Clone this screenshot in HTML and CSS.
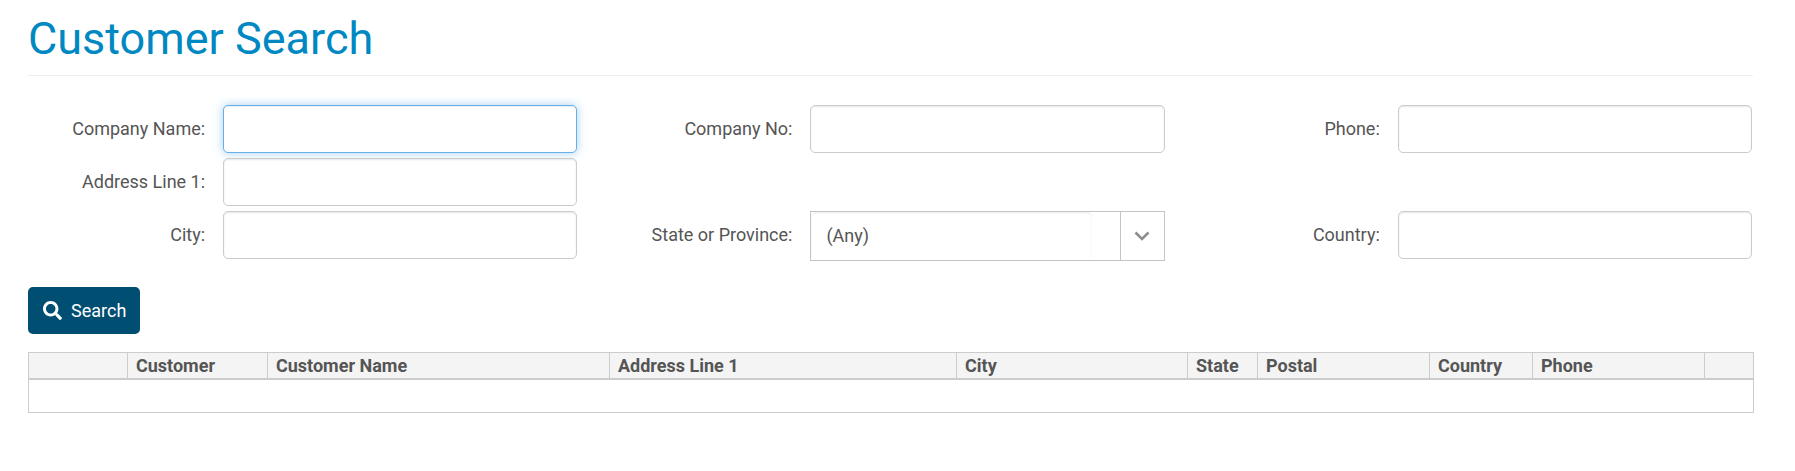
FILE: index.html
```html
<!DOCTYPE html>
<html lang="en">
<head>
<meta charset="utf-8">
<title>Customer Search</title>
<link rel="stylesheet" href="styles.css">
</head>
<body>
<main class="page">
  <h1 class="page-title">Customer Search</h1>
  <form class="search-form">
    <div class="fields">
      <div class="field">
        <label class="field-label" for="company-name">Company Name:</label>
        <input class="field-input is-active" id="company-name" type="text">
      </div>
      <div class="field">
        <label class="field-label" for="company-no">Company No:</label>
        <input class="field-input" id="company-no" type="text">
      </div>
      <div class="field">
        <label class="field-label" for="phone">Phone:</label>
        <input class="field-input" id="phone" type="text">
      </div>
      <div class="field field-row-start">
        <label class="field-label" for="address">Address Line 1:</label>
        <input class="field-input" id="address" type="text">
      </div>
      <div class="field field-row-start">
        <label class="field-label" for="city">City:</label>
        <input class="field-input" id="city" type="text">
      </div>
      <div class="field">
        <label class="field-label" for="state">State or Province:</label>
        <div class="combo">
          <select class="combo-select" id="state"><option>(Any)</option></select>
          <span class="combo-arrow">
            <svg width="16" height="10" viewBox="0 0 16 10" aria-hidden="true"><path d="M1.500 1.500L8 8l6.500-6.500" fill="none" stroke="#8c8c8c" stroke-width="2.500"/></svg>
          </span>
        </div>
      </div>
      <div class="field">
        <label class="field-label" for="country">Country:</label>
        <input class="field-input" id="country" type="text">
      </div>
    </div>
    <button class="search-button" type="button">
      <svg width="19" height="19" viewBox="0 0 512 512" aria-hidden="true"><path fill="currentColor" d="M505 442.700L405.300 343c-4.500-4.500-10.600-7-17-7H372c27.600-35.300 44-79.700 44-128C416 93.100 322.900 0 208 0S0 93.100 0 208s93.100 208 208 208c48.300 0 92.700-16.400 128-44v16.300c0 6.400 2.500 12.500 7 17l99.700 99.700c9.400 9.400 24.600 9.400 33.900 0l28.300-28.300c9.400-9.400 9.400-24.600.1-34zM208 336c-70.700 0-128-57.200-128-128 0-70.700 57.200-128 128-128 70.700 0 128 57.200 128 128 0 70.700-57.200 128-128 128z"/></svg>
      Search
    </button>
  </form>
  <table class="results">
    <colgroup>
      <col class="col-select"><col class="col-customer"><col class="col-name"><col class="col-address"><col class="col-city"><col class="col-state"><col class="col-postal"><col class="col-country"><col class="col-phone"><col class="col-end">
    </colgroup>
    <thead>
      <tr><th></th><th>Customer</th><th>Customer Name</th><th>Address Line 1</th><th>City</th><th>State</th><th>Postal</th><th>Country</th><th>Phone</th><th></th></tr>
    </thead>
    <tbody>
      <tr><td colspan="10"></td></tr>
    </tbody>
  </table>
</main>
</body>
</html>
```
FILE: styles.css
```css
* { box-sizing: border-box; }

body {
  margin: 0;
  background: #fff;
  color: #555;
  font: 18px/26px Roboto, "Liberation Sans", sans-serif;
}

.page { padding: 12px 42px 24px 28px; }

.page-title {
  margin: 0 0 29px;
  padding-bottom: 10px;
  border-bottom: 1px solid #eee;
  color: #0088c2;
  font-size: 45px;
  font-weight: 400;
  line-height: 53px;
}

.search-form { margin-bottom: 18px; }

.fields {
  display: grid;
  grid-template-columns: repeat(3, 1fr);
  gap: 5px 38px;
  margin-bottom: 26px;
  padding-right: 1px;
}

.field {
  display: grid;
  grid-template-columns: 195fr 354fr;
  align-items: start;
}

.field-row-start { grid-column-start: 1; }

.field-label {
  padding-right: 18px;
  line-height: 48px;
  text-align: right;
}

.field-input {
  width: 100%;
  height: 48px;
  padding: 8px 14px;
  border: 1px solid #ccc;
  border-radius: 5px;
  background: #fff;
  box-shadow: inset 0 1px 2px rgba(0, 0, 0, 0.1);
  color: inherit;
  font: inherit;
}

.field-input.is-active,
.field-input:focus {
  border-color: #66afe9;
  outline: 0;
  box-shadow: inset 0 1px 1px rgba(0, 0, 0, 0.075), 0 0 10px rgba(102, 175, 233, 0.6);
}

.combo {
  display: flex;
  height: 50px;
  border: 1px solid #c4c4c4;
}

.combo-select {
  appearance: none;
  flex: 1;
  min-width: 0;
  margin-right: 28px;
  padding: 0 15px;
  border: 0;
  border-radius: 5px;
  background: #fff;
  box-shadow: inset 0 1px 2px rgba(0, 0, 0, 0.08);
  color: inherit;
  font: inherit;
}

.combo-arrow {
  display: flex;
  flex: 0 0 44px;
  align-items: center;
  justify-content: center;
  border-left: 1px solid #c4c4c4;
}

.search-button {
  display: flex;
  align-items: center;
  gap: 9px;
  height: 47px;
  padding: 0 14px 0 15px;
  border: 0;
  border-radius: 5px;
  background: #004f73;
  color: #fff;
  font: inherit;
}

.results {
  width: 100%;
  border-collapse: collapse;
  table-layout: fixed;
}

.results th {
  height: 26px;
  padding: 0 8px;
  border: 1px solid #ccc;
  border-bottom-width: 2px;
  background: #f4f4f4;
  font-weight: 700;
  line-height: 25px;
  text-align: left;
}

.results td {
  height: 33px;
  padding: 0;
  border: 1px solid #ccc;
}

.col-select { width: 99px; }
.col-customer { width: 140px; }
.col-name { width: 342px; }
.col-address { width: 347px; }
.col-city { width: 231px; }
.col-state { width: 70px; }
.col-postal { width: 172px; }
.col-country { width: 103px; }
.col-phone { width: 172px; }
.col-end { width: 49px; }
```
